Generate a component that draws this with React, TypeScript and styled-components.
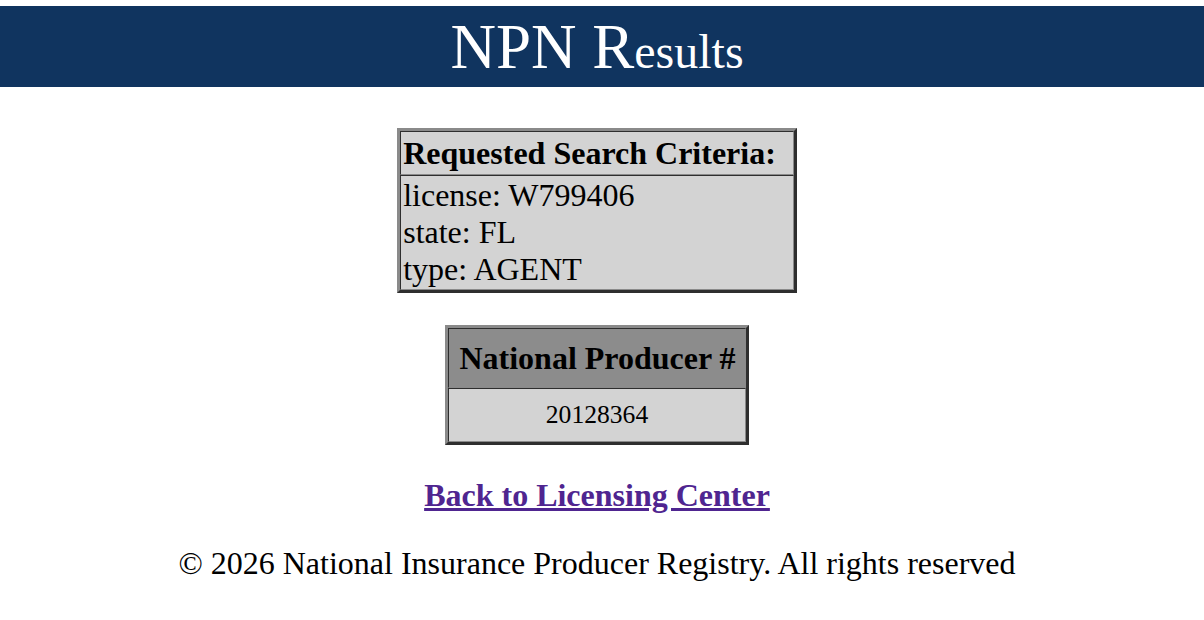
import React, { FC } from 'react';
import styled, { createGlobalStyle } from 'styled-components';

const GlobalStyle = createGlobalStyle`
  body {
    margin: 0;
    background: #ffffff;
    font-family: "Liberation Serif", "Times New Roman", serif;
    color: #000000;
  }
`;

const Header = styled.div`
  margin-top: 6px;
  height: 81px;
  background-color: #10345f;
  color: #ffffff;
  display: flex;
  justify-content: center;
  align-items: center;
  padding-right: 10px;
`;

const Title = styled.h1`
  margin: 0;
  font-weight: normal;
  font-size: 63px;
  line-height: 1;
  padding-top: 2px;
`;

const Small = styled.span`
  font-size: 48px;
`;

const Main = styled.div`
  display: flex;
  flex-direction: column;
  align-items: center;
  padding-right: 10px;
`;

const Table = styled.table<{ top: number }>`
  margin-top: ${(p) => p.top}px;
  border-collapse: separate;
  border-spacing: 0;
  border: 3px solid;
  border-color: #8a8a8a #2e2e2e #2e2e2e #8a8a8a;
  background-color: #d3d3d3;
`;

const Th = styled.th<{ dark?: boolean; pad: string }>`
  background-color: ${(p) => (p.dark ? '#8c8c8c' : '#d3d3d3')};
  border: 1px solid;
  border-color: #2e2e2e #8a8a8a #8a8a8a #2e2e2e;
  padding: ${(p) => p.pad};
  font-size: 32px;
  font-weight: bold;
  text-align: left;
  white-space: nowrap;
`;

const Td = styled.td<{ center?: boolean; pad: string; size: number }>`
  border: 1px solid;
  border-color: #2e2e2e #8a8a8a #8a8a8a #2e2e2e;
  padding: ${(p) => p.pad};
  font-size: ${(p) => p.size}px;
  text-align: ${(p) => (p.center ? 'center' : 'left')};
  white-space: nowrap;
`;

const BackLink = styled.a`
  margin-top: 32px;
  font-size: 32px;
  font-weight: bold;
  color: #4f2590;
  text-decoration: underline;
`;

const Footer = styled.p`
  margin: 31px 0 0;
  font-size: 32px;
`;

const App: FC = () => {
  return (
    <>
      <GlobalStyle />
      <Header>
        <Title>
          NPN R<Small>esults</Small>
        </Title>
      </Header>
      <Main>
        <Table top={41}>
          <thead>
            <tr>
              <Th pad="3px 17px 2px 2px">Requested Search Criteria:</Th>
            </tr>
          </thead>
          <tbody>
            <tr>
              <Td pad="1px 2px 1px" size={32}>
                license: W799406
                <br />
                state: FL
                <br />
                type: AGENT
              </Td>
            </tr>
          </tbody>
        </Table>
        <Table top={32}>
          <thead>
            <tr>
              <Th dark pad="11px 9px 10px 10px">National Producer #</Th>
            </tr>
          </thead>
          <tbody>
            <tr>
              <Td center pad="11px 10px" size={25.6}>20128364</Td>
            </tr>
          </tbody>
        </Table>
        <BackLink href="#">Back to Licensing Center</BackLink>
        <Footer>© 2026 National Insurance Producer Registry. All rights reserved</Footer>
      </Main>
    </>
  );
};

export default App;
